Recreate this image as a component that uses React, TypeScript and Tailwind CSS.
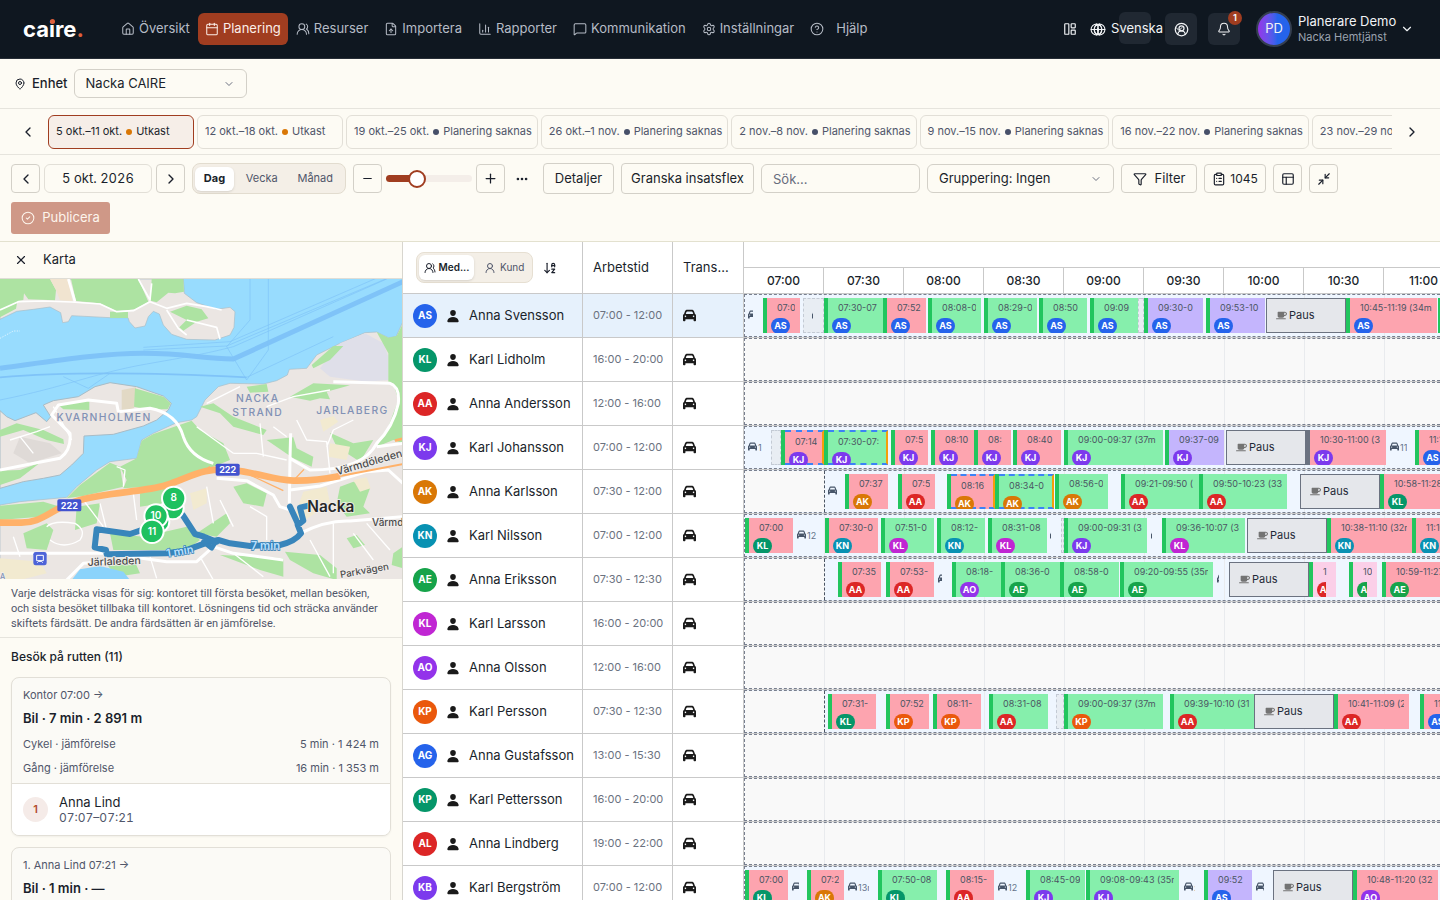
import type { ReactNode } from "react";
import {
  ArrowDownAZ,
  Bell,
  Calendar,
  ChartColumn,
  ChevronDown,
  ChevronLeft,
  ChevronRight,
  CircleCheck,
  CircleUserRound,
  ClipboardList,
  Ellipsis,
  FileUp,
  Funnel,
  Globe,
  HelpCircle,
  House,
  LayoutPanelLeft,
  MapPin,
  MessageSquare,
  Minimize2,
  Minus,
  PanelsTopLeft,
  Plus,
  Settings,
  UserRound,
  UsersRound,
  X,
} from "lucide-react";
import { FaCar, FaMugSaucer } from "react-icons/fa6";
import { IoPerson } from "react-icons/io5";

const navItems = [
  { label: "Översikt", icon: House },
  { label: "Planering", icon: Calendar, active: true },
  { label: "Resurser", icon: UsersRound },
  { label: "Importera", icon: FileUp },
  { label: "Rapporter", icon: ChartColumn },
  { label: "Kommunikation", icon: MessageSquare },
  { label: "Inställningar", icon: Settings },
  { label: "Hjälp", icon: HelpCircle, wide: true },
];

const weeks = [
  { range: "5 okt.–11 okt.", draft: true, active: true },
  { range: "12 okt.–18 okt.", draft: true },
  { range: "19 okt.–25 okt." },
  { range: "26 okt.–1 nov." },
  { range: "2 nov.–8 nov." },
  { range: "9 nov.–15 nov." },
  { range: "16 nov.–22 nov." },
  { range: "23 nov.–29 nov." },
];

const hours = ["07:00", "07:30", "08:00", "08:30", "09:00", "09:30", "10:00", "10:30", "11:00"];

const people: Record<string, string> = {
  AS: "bg-[#2563eb]",
  KL: "bg-[#059669]",
  AA: "bg-[#dc2626]",
  KJ: "bg-[#7c3aed]",
  AK: "bg-[#d97706]",
  KN: "bg-[#0891b2]",
  AE: "bg-[#16a34a]",
  KM: "bg-[#c026d3]",
  AO: "bg-[#9333ea]",
  KP: "bg-[#ea580c]",
  AL: "bg-[#dc2626]",
};

const tones: Record<string, string> = {
  r: "bg-[#fda4af]",
  g: "bg-[#86efac]",
  p: "bg-[#c4b5fd]",
  k: "bg-[#fbcfe8]",
};

type Item = {
  kind: "visit" | "pause" | "buffer" | "drive";
  x: number;
  w: number;
  tone?: string;
  time?: string;
  who?: string;
  pinned?: boolean;
  afterPause?: boolean;
};

const visit = (x: number, end: number, tone: string, time: string, who: string, extra = {}): Item => ({
  kind: "visit",
  x,
  w: end - x,
  tone,
  time,
  who,
  ...extra,
});
const pause = (x: number): Item => ({ kind: "pause", x, w: 80 });
const buffer = (x: number, end: number): Item => ({ kind: "buffer", x, w: end - x });
const drive = (x: number, w: number, time = ""): Item => ({ kind: "drive", x, w, time });
const pinned = { pinned: true };

type Row = {
  initials: string;
  color: string;
  name: string;
  hours: string;
  off?: number;
  items?: Item[];
};

const rows: Row[] = [
  {
    initials: "AS", color: "AS", name: "Anna Svensson", hours: "07:00 - 12:00",
    items: [
      drive(4, 5),
      visit(19, 56, "r", "07:0", "AS"),
      buffer(59, 80),
      drive(68, 1),
      visit(80, 139, "g", "07:30-07", "AS"),
      visit(139, 182, "r", "07:52", "AS"),
      visit(184, 237, "g", "08:08-0", "AS"),
      visit(240, 293, "g", "08:29-0", "AS"),
      visit(295, 343, "g", "08:50", "AS"),
      visit(346, 394, "g", "09:09", "AS"),
      buffer(394, 400),
      visit(400, 459, "p", "09:30-0", "AS"),
      visit(462, 521, "p", "09:53-10", "AS"),
      pause(522),
      visit(602, 693, "r", "10:45-11:19 (34m)", "AS"),
      visit(694, 720, "g", "", ""),
    ],
  },
  { initials: "KL", color: "KL", name: "Karl Lidholm", hours: "16:00 - 20:00" },
  { initials: "AA", color: "AA", name: "Anna Andersson", hours: "12:00 - 16:00" },
  {
    initials: "KJ", color: "KJ", name: "Karl Johansson", hours: "07:00 - 12:00",
    items: [
      drive(4, 16, "1"),
      buffer(27, 37),
      visit(37, 80, "r", "07:14", "KJ", pinned),
      visit(80, 144, "g", "07:30-07:", "KJ", pinned),
      visit(147, 184, "r", "07:5", "KJ"),
      visit(187, 230, "r", "08:10", "KJ"),
      visit(230, 267, "r", "08:", "KJ"),
      visit(269, 317, "r", "08:40", "KJ"),
      visit(320, 419, "g", "09:00-09:37 (37m", "KJ"),
      visit(421, 480, "p", "09:37-09", "KJ"),
      pause(482),
      visit(562, 642, "r", "10:30-11:00 (3", "KJ", { afterPause: true }),
      drive(646, 17, "11"),
      visit(671, 740, "r", "11:12", "AS"),
    ],
  },
  {
    initials: "AK", color: "AK", name: "Anna Karlsson", hours: "07:30 - 12:00", off: 80,
    items: [
      drive(84, 10),
      visit(101, 144, "r", "07:37", "AK"),
      visit(154, 191, "r", "07:5", "AA"),
      visit(203, 251, "r", "08:16", "AK", pinned),
      visit(251, 310, "g", "08:34-0", "AK", pinned),
      visit(311, 364, "g", "08:56-0", "AK"),
      visit(377, 455, "g", "09:21-09:50 (", "AA"),
      visit(455, 543, "g", "09:50-10:23 (33", "AA"),
      pause(556),
      visit(636, 720, "r", "10:58-11:28", "KL"),
    ],
  },
  {
    initials: "KN", color: "KN", name: "Karl Nilsson", hours: "07:00 - 12:00",
    items: [
      visit(1, 49, "r", "07:00", "KL"),
      drive(53, 20, "12"),
      visit(81, 134, "r", "07:30-0", "KN"),
      visit(137, 190, "g", "07:51-0", "KM"),
      visit(193, 241, "g", "08:12-", "KN"),
      visit(244, 303, "g", "08:31-08", "KM"),
      drive(306, 1),
      buffer(317, 320),
      visit(320, 403, "g", "09:00-09:31 (3", "KJ"),
      drive(407, 1),
      visit(418, 501, "g", "09:36-10:07 (3", "KM"),
      pause(503),
      visit(583, 668, "r", "10:38-11:10 (32m", "KN"),
      visit(668, 740, "r", "11:10", "KN"),
    ],
  },
  {
    initials: "AE", color: "AE", name: "Anna Eriksson", hours: "07:30 - 12:30", off: 80,
    items: [
      visit(94, 137, "r", "07:35", "AA"),
      visit(142, 190, "r", "07:53-", "AA"),
      drive(194, 4),
      visit(208, 257, "g", "08:18-", "AO"),
      visit(257, 316, "g", "08:36-0", "AE"),
      visit(316, 375, "g", "08:58-0", "AE"),
      visit(376, 469, "g", "09:20-09:55 (35m", "AE"),
      drive(473, 2),
      pause(485),
      visit(565, 592, "k", "1", "AA"),
      visit(605, 633, "k", "10", "AE"),
      visit(638, 720, "r", "10:59-11:27", "AE"),
    ],
  },
  { initials: "KL", color: "KM", name: "Karl Larsson", hours: "16:00 - 20:00" },
  { initials: "AO", color: "AO", name: "Anna Olsson", hours: "12:00 - 16:00" },
  {
    initials: "KP", color: "KP", name: "Karl Persson", hours: "07:30 - 12:30", off: 80,
    items: [
      visit(84, 132, "r", "07:31-", "KL"),
      visit(142, 185, "r", "07:52", "KP"),
      visit(189, 237, "r", "08:11-", "KP"),
      visit(245, 304, "g", "08:31-08", "AA"),
      buffer(312, 320),
      visit(320, 419, "g", "09:00-09:37 (37m", "KP"),
      visit(426, 510, "g", "09:39-10:10 (31", "AA"),
      pause(510),
      visit(590, 665, "r", "10:41-11:09 (2", "AA"),
      visit(676, 740, "r", "11:14", "AS"),
    ],
  },
  { initials: "AG", color: "AS", name: "Anna Gustafsson", hours: "13:00 - 15:30" },
  { initials: "KP", color: "KL", name: "Karl Pettersson", hours: "16:00 - 20:00" },
  { initials: "AL", color: "AL", name: "Anna Lindberg", hours: "19:00 - 22:00" },
  {
    initials: "KB", color: "KJ", name: "Karl Bergström", hours: "07:00 - 12:00",
    items: [
      visit(1, 44, "r", "07:00", "KL"),
      drive(48, 7),
      visit(63, 100, "r", "07:2", "AK"),
      drive(104, 21, "13m"),
      visit(134, 193, "g", "07:50-08", "KL"),
      visit(202, 250, "r", "08:15-", "AA"),
      drive(254, 20, "12"),
      visit(282, 341, "g", "08:45-09", "KJ"),
      visit(342, 435, "g", "09:08-09:43 (35m", "KJ"),
      drive(440, 11, ":"),
      visit(460, 508, "p", "09:52", "AS"),
      drive(512, 8),
      pause(529),
      visit(609, 694, "r", "10:48-11:20 (32m", "AO"),
    ],
  },
];

const TimelineItem = ({ item }: { item: Item }) => {
  const place = { left: item.x, width: item.w };
  if (item.kind === "pause") {
    return (
      <div style={place} className="absolute top-1 h-[35px] border border-[#6b7280] bg-[#e5e7eb] flex items-center gap-[2px] pl-[9px] text-[11px] text-[#1f2937]">
        <FaMugSaucer className="size-[11px] text-[#737373]" />
        Paus
      </div>
    );
  }
  if (item.kind === "buffer") {
    return <div style={place} className="absolute top-1 h-[35px] border border-dashed border-[#c3cad4] bg-[#e8edf3]" />;
  }
  if (item.kind === "drive") {
    return (
      <div style={place} className="absolute top-3 h-4 overflow-hidden flex items-center gap-px text-[9px] text-[#64748b]">
        <FaCar className="size-[9px] shrink-0 text-[#475569]" />
        <span className="pt-1">{item.time}</span>
      </div>
    );
  }
  return (
    <div style={place} className={`absolute top-1 h-[35px] overflow-hidden flex ${tones[item.tone!]}`}>
      <div className={`w-1 shrink-0 ${item.afterPause ? "bg-[#6b7280]" : "bg-[#22c55e]"}`} />
      <div
        className={`flex-1 min-w-0 ${
          item.pinned
            ? "border-y-2 border-y-[#3b82f6] border-r-2 border-r-[#f59e0b] [border-top-style:dashed] [border-bottom-style:dashed]"
            : ""
        }`}
      >
        <div className="ml-[10px] mr-[5px] mt-[3px] h-[14px] overflow-hidden whitespace-nowrap text-[9px] leading-[14px] text-[#4b5563]">
          {item.time}
        </div>
        {item.who && (
          <div className={`ml-1 mr-[10px] mt-[3px] h-4 ${item.w < 30 ? "overflow-hidden" : ""}`}>
            <span className={`flex w-[19px] h-4 rounded-full items-center justify-center text-[9px] font-bold text-white ${people[item.who]}`}>
              {item.who === "KM" ? "KL" : item.who}
            </span>
          </div>
        )}
      </div>
    </div>
  );
};

const Timeline = ({ row }: { row: Row }) => (
  <div className={`relative h-[43px] overflow-hidden border-y border-l border-dashed border-[#787f8e] ${row.items ? "bg-[#eff6ff]" : "bg-[#f9f9f9]"}`}>
    <div className="absolute inset-0 flex">
      {hours.map((h) => (
        <div key={h} className="w-20 shrink-0 border-r border-[#e9ebee]" />
      ))}
    </div>
    {row.off && (
      <div style={{ width: row.off }} className="absolute inset-y-0 left-0 bg-[#f9f9f9] border-r border-dashed border-[#4b5563]" />
    )}
    <div className="absolute -top-px -left-px bottom-0 right-0">
      {row.items?.map((item, i) => <TimelineItem key={i} item={item} />)}
    </div>
  </div>
);

const CityMap = () => (
  <svg viewBox="0 117 1209 900" preserveAspectRatio="xMinYMin slice" className="block w-full h-[300px]" fontFamily="Inter, sans-serif">
    <rect y="117" width="1209" height="903" fill="#98dcfe" />
    {/* shipping lanes */}
    <g fill="none" stroke="#7fc3f8" strokeWidth="2">
      <path d="M0 385C150 365 300 340 430 340S600 355 700 357L1209 125" strokeWidth="15" />
      <path d="M0 412C200 395 500 400 740 412" strokeWidth="5" />
      <path d="M0 480C200 440 280 400 440 372S620 340 700 320L1160 117M740 420L805 330V117M740 420L680 320 750 240V117M190 410L265 445 330 400M430 330L680 318 1209 95M430 322L690 305 1209 80M740 412L1000 290" />
    </g>
    <path d="M0 295L40 273H60" fill="none" stroke="#fff" strokeWidth="2" strokeDasharray="4 4" />
    {/* north shore */}
    <path d="M0 117H550L553 160 590 188 650 208 690 202 705 215 702 262 690 285 645 300 560 298 515 283 490 255 478 222 460 214 445 230 435 258 405 264 388 245 384 233 330 233 215 227 205 245 188 248 182 218 150 201 100 208 50 214 0 238Z" fill="#ebe6e3" stroke="#a9bcc6" strokeWidth="2" />
    <g fill="#ade3a2">
      <path d="M0 117H150L168 150 165 181 85 178 72 160 70 180 52 184 48 206 0 232Z" />
      <path d="M213 117H415L445 185 405 208 350 214 300 190 228 183Z" />
      <path d="M455 117H550L552 155 525 160 505 158 470 187 452 182Z" />
      <path d="M510 215L560 197 605 208 625 235 590 245 550 272 538 262 560 240Z" />
      <path d="M330 215L384 215V234L330 234Z" />
    </g>
    <path d="M150 117H205L217 183 180 181 168 150Z" fill="#f1e4d0" />
    <g fill="none" stroke="#fff" strokeLinejoin="round">
      <path d="M205 117L225 185" strokeWidth="8" />
      <path d="M0 210L55 185 130 183 215 186 300 192 350 215 400 212 450 185 500 205 560 190 620 200 665 210M500 210L535 265 560 285M415 117L450 180 455 130M560 240L650 262 660 298" strokeWidth="5" />
    </g>
    {/* mainland */}
    <path d="M1209 245L1188 290 1165 293 1130 276 1095 278 1020 310 950 345 920 385 868 388 862 405 830 422 790 432 690 430 655 440 615 480 590 530 575 540 530 548 460 580 425 600 410 655 330 665 290 690 230 740 200 772 60 785 0 795V1020H1209Z" fill="#ebe6e3" stroke="#a9bcc6" strokeWidth="2" />
    {/* Kvarnholmen */}
    <path d="M0 512L20 530 45 542 108 518 140 545 152 530 130 495 160 482 235 470 285 440 330 428 410 440 490 468 514 490 505 510 470 540 430 558 340 583 252 588 250 640 215 675 180 705 130 715 70 725 0 745Z" fill="#ebe6e3" stroke="#a9bcc6" strokeWidth="3" />
    <path d="M1020 310L1095 280 1150 310 1165 350V420L1100 425 990 410 960 385Z" fill="#dfdfe9" />
    <path d="M60 590L150 610 185 640 90 670 40 640Z" fill="#dfdad7" />
    <path d="M365 450L408 442 402 505 365 515Z" fill="#e2d9c5" />
    <g fill="#ade3a2">
      <path d="M405 445L490 470 512 490 503 508 440 508 402 500Z" />
      <path d="M175 495L268 478V510L190 508Z" />
      <path d="M0 570L50 550 130 570 190 598 192 612 140 600 70 570 0 590Z" />
      <path d="M0 692L60 690 120 668 60 715 0 735Z" />
      <path d="M575 542L600 570 670 610 690 660 640 680 560 715 480 738 370 745 380 720 360 680 410 655 425 602 460 582Z" />
      <path d="M330 668L360 680 370 740 250 768 200 775 240 735Z" />
      <path d="M0 797L130 785 180 800 120 830 0 840Z" />
      <path d="M1209 250V610L1180 600 1130 620 1165 560 1195 480 1180 430 1165 425V340L1130 276 1165 293 1190 288Z" />
      <path d="M870 470L940 430 1050 436 980 455 990 478 960 475 930 482Z" />
      <path d="M935 375L1000 318 1030 318 990 360 940 385Z" />
      <path d="M600 500L640 490 700 530 800 570 790 585 700 560 660 520Z" />
      <path d="M740 440L800 432 805 455 750 458Z" />
      <path d="M800 600L880 592 890 625 940 650 935 680 880 655Z" />
      <path d="M990 578L1060 610 1120 600 1080 665 1010 620Z" />
      <path d="M700 740L740 730 800 760 790 800 730 790Z" />
      <path d="M1020 740L1060 725 1110 745 1090 800 1110 820 1040 830 1010 790Z" />
      <path d="M70 880L140 850 160 870 140 930 80 925Z" />
      <path d="M230 800L300 790 290 850 225 870Z" />
      <path d="M420 760L500 745 490 790 420 800Z" />
      <path d="M330 880L430 890 560 860 600 900 560 930 340 930Z" />
      <path d="M310 960L400 955 420 1000 350 1010Z" />
      <path d="M660 945L780 950 850 955V1010L780 990 700 960Z" />
      <path d="M855 935L960 945 1010 985 1010 1020 940 1000 870 960Z" />
      <path d="M1040 895L1070 885 1095 915 1060 925Z" />
      <path d="M590 880L680 820 690 850 650 890Z" />
      <path d="M1180 940L1209 920V985L1175 975Z" />
    </g>
    <g fill="#f2ead0">
      <path d="M990 610L1050 620 1040 660 985 650Z" />
      <path d="M1060 720L1100 712 1112 745 1080 755Z" />
      <path d="M910 755L980 740 990 790 900 850 880 840Z" />
      <path d="M570 760L620 745 620 790 580 810Z" />
      <path d="M960 540L1000 528 1015 545 970 575Z" />
      <path d="M0 955L120 965 140 1000 60 1020H0Z" />
    </g>
    <path d="M215 1020L240 988 300 978 370 995 390 1020Z" fill="#8bd3fb" />
    {/* minor streets */}
    <g fill="none" stroke="#fff" strokeLinejoin="round">
      <path d="M30 600L110 575 150 560M60 590L100 640M160 500L215 600M250 780L310 860M370 740L375 690 350 680M140 860Q160 840 225 850 260 870 240 900 190 930 150 900M300 790L320 870M590 560L700 640M700 640L770 640 860 660M780 550L790 650M890 540L920 600 980 605 990 700M800 500L880 470 990 450M620 490L720 440M860 590L820 560M1060 540L1000 570 980 620M660 780L700 860M750 800L800 830 800 900M1000 850V1000M700 940L790 1010M1100 850L1170 930M930 900L990 1010M1060 880L1120 960M600 950L640 1020M450 950L470 1015M40 890L60 950M400 760L410 840M620 740L640 850" strokeWidth="4" />
      <path d="M0 690L110 668 180 655Q215 630 210 580L155 525 175 495 265 480 350 490 355 515 450 505Q530 520 550 590 570 650 640 670" strokeWidth="9" />
      <path d="M1000 425L1170 430Q1200 440 1195 490 1180 560 1130 610 1090 690 930 690L870 655 872 580M870 655L868 790M870 750L960 738 1100 695 1165 690 1209 730M1130 620L1209 610" strokeWidth="9" />
      <path d="M0 940H320L500 965 590 965 640 920M200 1020L250 970 320 965M640 920L700 940 850 960M650 715L740 722 820 765 840 800 870 810M900 880Q980 840 1050 843L1209 830" strokeWidth="9" />
    </g>
    {/* motorway 222 */}
    <g fill="none" stroke="#ffb169">
      <path d="M750 705L850 752M880 722L912 688M630 680L600 700" strokeWidth="4" />
      <path d="M0 848H60C130 850 150 805 240 780C330 755 430 757 500 735C570 712 610 680 700 690C780 700 820 720 880 722C930 723 980 716 1020 708" strokeWidth="20" />
      <path d="M1020 708L1209 672" strokeWidth="6" />
      <path d="M1209 596L1185 602" strokeWidth="8" />
    </g>
    {/* planned route */}
    <g fill="none" stroke="#3885bb" strokeWidth="18" strokeLinejoin="round" strokeLinecap="round">
      <path d="M925 797L900 803 910 842 893 855 903 880Q885 905 840 915L750 918 690 910 655 900 615 910 555 932 500 940 320 943 318 930 284 922 290 868 390 882 440 865" />
      <path d="M548 825L585 882 612 890 650 905M870 800L893 850" />
      <path d="M610 905L650 900 635 925Z" strokeWidth="14" />
    </g>
    <g fill="#8191b5" fontSize="31" fontWeight="500" textAnchor="middle" letterSpacing="4" stroke="#ebe6e3" strokeWidth="4" paintOrder="stroke">
      <text x="312" y="544">KVARNHOLMEN</text>
      <text x="773" y="486">NACKA</text>
      <text x="773" y="528">STRAND</text>
      <text x="1057" y="521">JARLABERG</text>
    </g>
    <g fill="#4b4b4b" fontSize="30" fontWeight="500" stroke="#f2efed" strokeWidth="5" paintOrder="stroke">
      <text x="1012" y="706" transform="rotate(-16 1012 706)" fontSize="32">Värmdöleden</text>
      <text x="263" y="978" transform="rotate(-2 263 978)" fontSize="32">Järlaleden</text>
      <text x="1022" y="1014" transform="rotate(-10 1022 1014)" fontSize="29">Parkvägen</text>
      <text x="1116" y="857">Värmdö</text>
      <text x="922" y="816" fontSize="46" fontWeight="600" fill="#262626">Nacka</text>
      <text x="0" y="1016" fontSize="22" fill="#8191b5">A</text>
    </g>
    <g fill="#b9e0ff" stroke="#2f7db5" strokeWidth="4" paintOrder="stroke" fontSize="34" fontWeight="600">
      <text x="500" y="952" transform="rotate(-9 500 952)">1 min</text>
      <text x="752" y="930">7 min</text>
    </g>
    <g fontSize="27" fontWeight="700" textAnchor="middle" fill="#fff">
      <rect x="647" y="671" width="72" height="36" rx="5" fill="#4353cf" />
      <text x="683" y="699">222</text>
      <rect x="172" y="778" width="72" height="36" rx="5" fill="#4353cf" />
      <text x="208" y="806">222</text>
      <rect x="100" y="936" width="40" height="40" rx="7" fill="#4d63d8" />
      <path d="M110 946h20v16h-20zM112 968l4-4h8l4 4" fill="none" stroke="#fff" strokeWidth="3" />
    </g>
    <g fill="#1fc160" stroke="#fff" strokeWidth="6">
      <circle cx="518" cy="805" r="33" />
      <circle cx="521" cy="775" r="35" />
      <circle cx="475" cy="845" r="33" />
      <circle cx="468" cy="828" r="35" />
      <circle cx="456" cy="874" r="35" />
    </g>
    <g fontSize="30" fontWeight="600" textAnchor="middle" fill="#fff">
      <text x="521" y="784">8</text>
      <text x="468" y="838">10</text>
      <text x="456" y="884">11</text>
    </g>
  </svg>
);

const ToolButton = ({ children, label, className = "" }: { children: ReactNode; label?: string; className?: string }) => (
  <button
    aria-label={label}
    className={`h-[29px] flex items-center justify-center rounded border border-[#d3d0c8] ${className}`}
  >
    {children}
  </button>
);

const Header = () => (
  <header className="h-[59px] shrink-0 bg-[#0f1720] border-b border-[#262d36] flex items-center text-[13px] text-[#b6bcc6]">
    <div className="ml-[23px] w-[90px] text-[22px] leading-7 font-bold text-white">
      ca
      <span className="relative">
        i<span className="absolute left-px top-[3px] size-[5px] rounded-full bg-[#e0603a]" />
      </span>
      re<span className="text-[#e0603a]">.</span>
    </div>
    <nav className="flex items-center">
      {navItems.map(({ label, icon: Icon, active, wide }) => (
        <a
          key={label}
          href="#"
          className={`h-8 flex items-center rounded-md whitespace-nowrap ${wide ? "gap-3" : "gap-1"} ${
            active ? "bg-[#a03d20] text-[#fbeee8] px-[7px]" : "px-2"
          }`}
        >
          <Icon className="size-[14px]" strokeWidth={1.75} />
          {label}
        </a>
      ))}
    </nav>
    <div className="ml-auto flex items-center text-[#f1f3f5]">
      <button aria-label="Layout">
        <LayoutPanelLeft className="size-[14px]" />
      </button>
      <button className="ml-[13px] flex items-center gap-[5px]">
        <span className="flex">
          <Globe className="size-[13px]" />
          <Globe className="size-[13px] -ml-[10px]" />
        </span>
        <span className="relative">
          <span className="absolute left-2 -top-[7px] w-8 h-8 rounded-md bg-[#202832]" />
          <span className="relative">Svenska</span>
        </span>
      </button>
      <button aria-label="Konto" className="relative ml-[2px] size-8 rounded-md bg-[#202832] flex items-center justify-center">
        <CircleUserRound className="size-[15px]" />
        <ChevronDown className="absolute left-2 size-3" />
      </button>
      <button aria-label="Aviseringar" className="relative ml-[11px] size-8 rounded-md bg-[#202832] flex items-center justify-center">
        <Bell className="size-[14px]" strokeWidth={1.75} />
        <span className="absolute -top-[2px] -right-[2px] size-[14px] rounded-full bg-[#a03d20] text-[9px] leading-[14px] font-bold">1</span>
      </button>
      <button className="ml-4 mr-[26px] flex items-center gap-[6px] text-left">
        <span className="size-9 rounded-full border-2 border-[#353f50] bg-linear-to-r from-[#9333ea] to-[#2563eb] to-60% flex items-center justify-center text-[13px]">
          PD
        </span>
        <span className="w-[96px] whitespace-nowrap">
          <span className="block leading-4">Planerare Demo</span>
          <span className="block text-[11px] leading-4 text-[#9ba3af]">Nacka Hemtjänst</span>
        </span>
        <ChevronDown className="size-[14px]" />
      </button>
    </div>
  </header>
);

const WeekBar = () => (
  <div className="h-[46px] shrink-0 border-b border-[#e6e4dd] flex items-center text-[11px]">
    <button aria-label="Föregående veckor" className="w-12 shrink-0 flex justify-center pr-2 pl-4">
      <ChevronLeft className="size-4" />
    </button>
    <div className="flex-1 min-w-0 overflow-hidden flex gap-[3px]">
      {weeks.map((w) => (
        <button
          key={w.range}
          className={`h-[34px] shrink-0 min-w-[146px] pl-[7px] pr-[5px] rounded-md border flex items-center gap-1 whitespace-nowrap ${
            w.active ? "border-[#a03d20] bg-[#f6eee8] text-[#1a1f2b]" : "border-[#e2dfd7] text-[#50566a]"
          }`}
        >
          {w.range}
          <span className={`size-[6px] rounded-full ${w.draft ? "bg-[#d97706]" : "bg-[#475069]"}`} />
          {w.draft ? "Utkast" : "Planering saknas"}
        </button>
      ))}
    </div>
    <button aria-label="Nästa veckor" className="w-12 shrink-0 flex justify-center pr-2">
      <ChevronRight className="size-4" />
    </button>
  </div>
);

const Toolbar = () => (
  <div className="shrink-0 border-b border-[#e3e1cf] px-[11px] pt-2 pb-[7px] flex flex-wrap items-center gap-x-[7px] gap-y-2 text-[13px]">
    <div className="flex gap-1">
      <ToolButton label="Föregående dag" className="w-[29px]">
        <ChevronLeft className="size-4" />
      </ToolButton>
      <button className="h-[29px] w-[108px] rounded-md border border-[#e2dfd7] tabular-nums">5 okt. 2026</button>
      <ToolButton label="Nästa dag" className="w-[29px]">
        <ChevronRight className="size-4" />
      </ToolButton>
    </div>
    <div className="h-[31px] w-[154px] flex items-center justify-between rounded-lg border border-[#e2dccf] bg-[#f4efe7] pl-[2px] pr-3 text-[11px] text-[#50566a]">
      <button className="h-6 w-[39px] rounded-md bg-white font-bold text-[#1a1f2b] shadow-sm">Dag</button>
      <button>Vecka</button>
      <button className="pl-2">Månad</button>
    </div>
    <div className="flex items-center gap-1">
      <ToolButton label="Zooma ut" className="w-[29px]">
        <Minus className="size-[13px]" />
      </ToolButton>
      <input
        type="range"
        aria-label="Zoom"
        defaultValue={33}
        className="w-[86px] h-[7px] appearance-none rounded-full bg-[linear-gradient(to_right,#a03d20_36%,#f4eee9_36%)] [&::-webkit-slider-thumb]:appearance-none [&::-webkit-slider-thumb]:size-[18px] [&::-webkit-slider-thumb]:rounded-full [&::-webkit-slider-thumb]:border-2 [&::-webkit-slider-thumb]:border-[#a03d20] [&::-webkit-slider-thumb]:bg-white"
      />
      <ToolButton label="Zooma in" className="w-[29px]">
        <Plus className="size-[15px]" />
      </ToolButton>
    </div>
    <button aria-label="Mer" className="px-[3px]">
      <Ellipsis className="size-[14px]" strokeWidth={2.5} />
    </button>
    <button className="h-[31px] w-[71px] ml-1 rounded border border-[#d3d0c8]">Detaljer</button>
    <button className="h-[31px] w-[133px] rounded border border-[#d3d0c8] whitespace-nowrap">Granska insatsflex</button>
    <input aria-label="Sök" placeholder="Sök..." className="h-[29px] w-[159px] rounded-md border border-[#d3d0c8] px-[11px] placeholder:text-[#676c7d]" />
    <div className="relative flex items-center">
      <select aria-label="Gruppering" className="h-[29px] w-[187px] appearance-none rounded-md border border-[#d3d0c8] pl-[11px]">
        <option>Gruppering: Ingen</option>
      </select>
      <ChevronDown className="pointer-events-none absolute right-3 size-3 text-[#6b7080]" />
    </div>
    <ToolButton className="w-[76px] gap-2">
      <Funnel className="size-[14px]" />
      Filter
    </ToolButton>
    <ToolButton className="w-[62px] gap-1 text-xs">
      <ClipboardList className="size-[14px]" />
      1045
    </ToolButton>
    <ToolButton label="Kolumner" className="w-[29px]">
      <PanelsTopLeft className="size-[14px]" />
    </ToolButton>
    <ToolButton label="Minimera" className="w-[29px]">
      <Minimize2 className="size-[14px]" />
    </ToolButton>
    <div className="w-full">
      <button className="h-8 w-[99px] rounded-[3px] bg-[#cf9887] text-[#fdf5ec] flex items-center justify-center gap-[7px]">
        <CircleCheck className="size-[14px]" strokeWidth={1.75} />
        Publicera
      </button>
    </div>
  </div>
);

const MapPanel = () => (
  <aside className="w-[403px] shrink-0 border-r border-[#d8d6cf] overflow-hidden">
    <div className="h-[37px] border-b border-[#dfddd6] flex items-center gap-[15px] pl-[14px] text-[13px]">
      <button aria-label="Stäng">
        <X className="size-[14px]" />
      </button>
      <h2>Karta</h2>
    </div>
    <CityMap />
    <p className="pl-[11px] pr-4 pt-[7px] pb-[6px] border-b border-[#e6e4dd] font-['Roboto',sans-serif] text-[11px] leading-[15px] text-[#50566a]">
      Varje delsträcka visas för sig: kontoret till första besöket, mellan besöken, och sista besöket tillbaka till
      kontoret. Lösningens tid och sträcka använder skiftets färdsätt. De andra färdsätten är en jämförelse.
    </p>
    <div className="px-[11px] pt-[10px]">
      <h3 className="text-xs leading-[18px] font-medium">Besök på rutten (11)</h3>
      <div className="mt-[11px] rounded-lg border border-[#e2dfd7] bg-[#fbfaf6] shadow-xs overflow-hidden">
        <div className="px-[11px] pt-2 pb-[6px] text-[11px] text-[#50566a]">
          <p className="leading-[18px]">Kontor 07:00 →</p>
          <p className="pt-1 leading-[20px] text-[13px] font-semibold text-[#1a1f2b]">Bil · 7 min · 2 891 m</p>
          <p className="flex justify-between h-6 items-end leading-4">
            Cykel · jämförelse <span>5 min · 1 424 m</span>
          </p>
          <p className="flex justify-between h-6 items-end leading-4">
            Gång · jämförelse <span>16 min · 1 353 m</span>
          </p>
        </div>
        <div className="mt-px border-t border-[#e2dfd7] bg-white h-[52px] px-[11px] flex items-center gap-[11px]">
          <span className="size-[25px] rounded-full bg-[#f5ebe8] text-[#b14a2c] text-[11px] font-semibold flex items-center justify-center">1</span>
          <div>
            <p className="text-[13px] leading-4">Anna Lind</p>
            <p className="text-xs leading-4 text-[#50566a] tabular-nums">07:07–07:21</p>
          </div>
        </div>
      </div>
      <div className="mt-[11px] rounded-lg border border-[#e2dfd7] bg-[#fbfaf6] px-[11px] pt-2 h-24 text-[11px] text-[#50566a]">
        <p className="leading-[18px]">1. Anna Lind 07:21 →</p>
        <p className="pt-1 leading-[20px] text-[13px] font-semibold text-[#1a1f2b]">Bil · 1 min · —</p>
      </div>
    </div>
  </aside>
);

const Schedule = () => (
  <div className="flex-1 min-w-0 overflow-hidden bg-white">
    <table className="w-full table-fixed border-separate border-spacing-0 text-[13px] text-left">
      <thead>
        <tr className="h-[52px] *:border-b *:border-r *:border-[#c9c9c9] *:font-normal *:last:border-r-0">
          <th className="w-[180px] pl-[13px]">
            <div className="flex items-center gap-[10px]">
              <div className="h-[31px] w-[117px] flex items-center gap-[10px] rounded-lg border border-[#e6dfd2] bg-[#f4efe7] pl-[2px] text-[10px] whitespace-nowrap">
                <button className="h-[25px] w-[55px] rounded-md bg-white shadow-sm flex items-center justify-center gap-[3px] font-semibold">
                  <UsersRound className="size-3" />
                  Med...
                </button>
                <button className="flex items-center gap-1 text-[#50566a]">
                  <UserRound className="size-3" />
                  Kund
                </button>
              </div>
              <button aria-label="Sortera">
                <ArrowDownAZ className="size-[14px]" />
              </button>
            </div>
          </th>
          <th className="w-[90px] pl-[10px]">Arbetstid</th>
          <th className="w-[71px] pl-[10px]">Trans...</th>
          <th className="align-bottom">
            <div className="flex h-[26px] border-t border-[#c9c9c9] overflow-hidden text-xs font-medium">
              {hours.map((h) => (
                <div key={h} className="w-20 shrink-0 border-r border-[#c9c9c9] flex items-center justify-center">
                  {h}
                </div>
              ))}
            </div>
          </th>
        </tr>
      </thead>
      <tbody>
        {rows.map((row, i) => (
          <tr key={row.name} className={`h-11 *:border-b *:border-r *:border-[#c9c9c9] *:last:border-r-0 ${i === 0 ? "bg-[#e6f1fc]" : ""}`}>
            <td className="pl-[10px]">
              <div className="flex items-center whitespace-nowrap">
                <span className={`size-6 rounded-full flex items-center justify-center text-[10px] font-bold text-white ${people[row.color]}`}>
                  {row.initials}
                </span>
                <IoPerson className="ml-[9px] mr-[9px] size-[14px] text-[#1a1a1a]" />
                {row.name}
              </div>
            </td>
            <td className="pl-[10px] text-[11px] text-[#6b7280] whitespace-nowrap">{row.hours}</td>
            <td className="pl-[10px]">
              <FaCar className="size-[13px] text-[#1a1a1a]" />
            </td>
            <td className="p-0 align-top">
              <Timeline row={row} />
            </td>
          </tr>
        ))}
      </tbody>
    </table>
  </div>
);

const App = () => (
  <div className="h-screen overflow-hidden flex flex-col bg-[#fdfbf4] text-[#1a1f2b] font-['Inter',sans-serif]">
    <Header />
    <div className="h-[50px] shrink-0 border-b border-[#e6e4dd] flex items-center pl-[14px] text-[13px]">
      <MapPin className="size-3" />
      <label htmlFor="unit" className="mx-[6px] font-medium">
        Enhet
      </label>
      <div className="relative flex items-center">
        <select id="unit" className="h-[29px] w-[173px] appearance-none rounded-md border border-[#d3d0c8] pl-[11px]">
          <option>Nacka CAIRE</option>
        </select>
        <ChevronDown className="pointer-events-none absolute right-3 size-3 text-[#6b7080]" />
      </div>
    </div>
    <WeekBar />
    <Toolbar />
    <main className="flex-1 min-h-0 flex">
      <MapPanel />
      <Schedule />
    </main>
  </div>
);

export default App;
